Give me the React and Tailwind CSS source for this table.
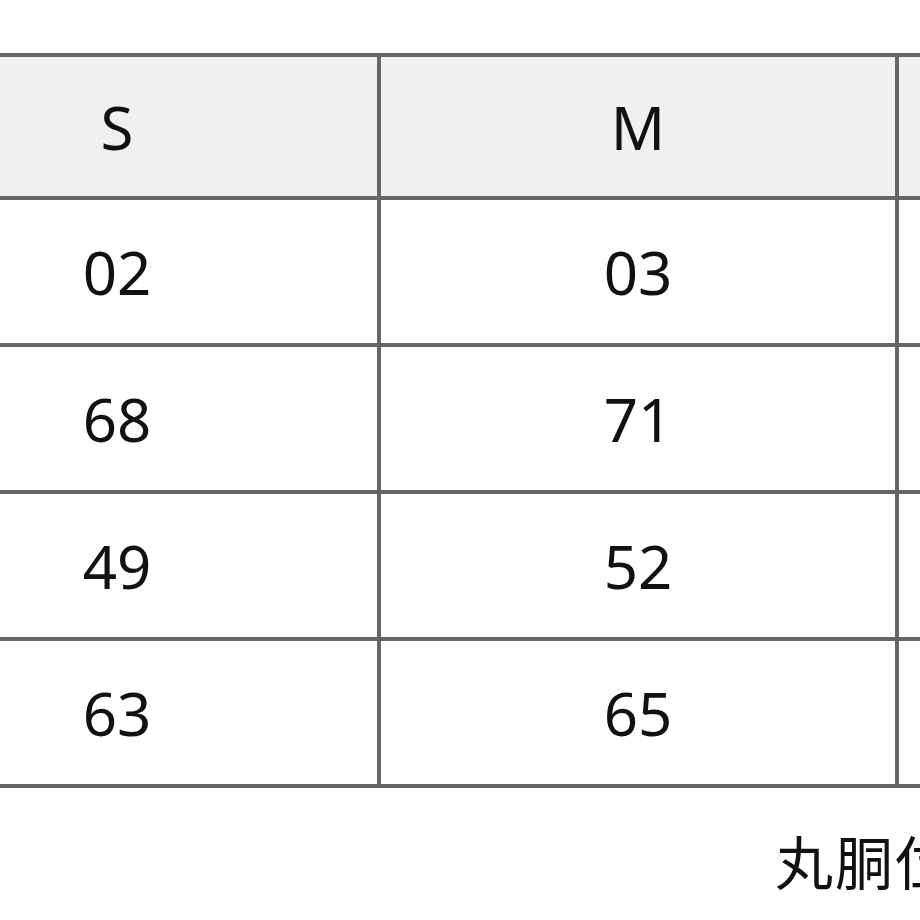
import React from "react";

const sizes = ["S", "M", "L"];
const rows = [
  ["02", "03", "04"],
  ["68", "71", "74"],
  ["49", "52", "55"],
  ["63", "65", "67"],
];

const font = { fontFamily: '"Noto Sans", "Noto Sans CJK JP", sans-serif' };

export default function App() {
  return (
    <div className="w-[920px] h-[920px] overflow-hidden bg-white text-[#111]" style={font}>
      {/* size table, cut off on both sides */}
      <div className="ml-[-147px] pt-[53px] w-[1600px]">
        <div className="grid grid-cols-[520px_514px_514px] gap-[4px] p-[4px] bg-[#666] w-max">
          {sizes.map((s) => (
            <div key={s} className="h-[139px] bg-[#f0f0f0] flex items-center justify-center text-[60px] leading-none">
              {s}
            </div>
          ))}
          {rows.map((r, i) =>
            r.map((v, j) => (
              <div key={i + "-" + j} className="h-[143px] bg-white flex items-center justify-center text-[60px] leading-none">
                {v}
              </div>
            ))
          )}
        </div>
      </div>

      {/* note under the table */}
      <div className="pl-[775px] mt-[46px] whitespace-nowrap text-[58px] leading-none tracking-[2px]">
        丸胴位置で計測
      </div>
    </div>
  );
}
